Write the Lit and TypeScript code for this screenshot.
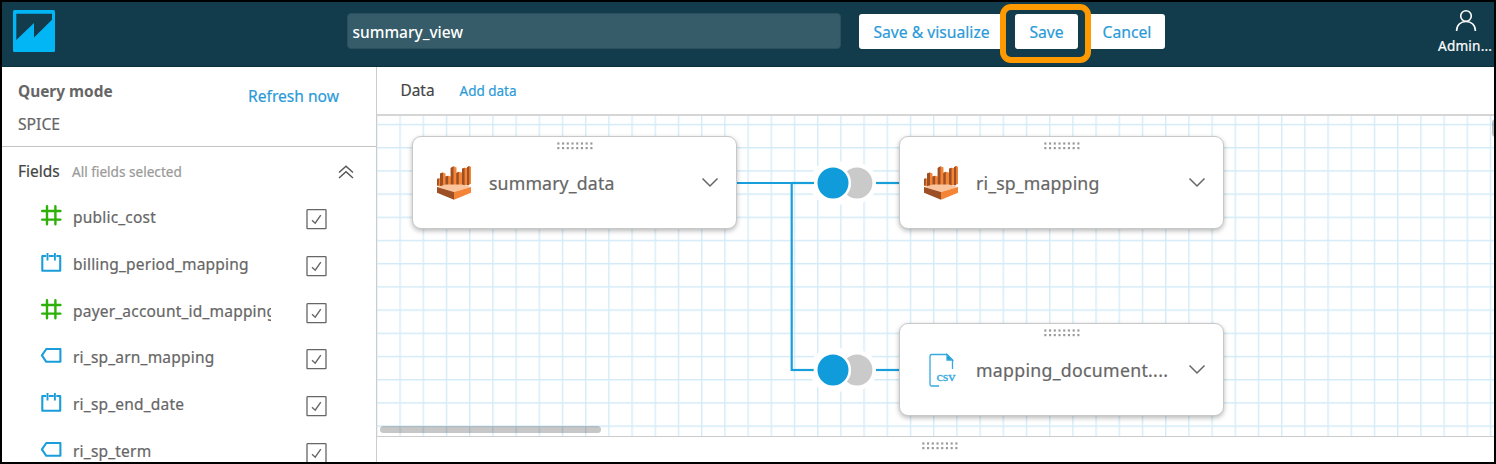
import { LitElement, html, svg, css } from "lit";
import { customElement, property } from "lit/decorators.js";

type FieldKind = "number" | "date" | "text";
interface Field { name: string; kind: FieldKind; }

const FIELDS: Field[] = [
  { name: "public_cost", kind: "number" },
  { name: "billing_period_mapping", kind: "date" },
  { name: "payer_account_id_mapping", kind: "number" },
  { name: "ri_sp_arn_mapping", kind: "text" },
  { name: "ri_sp_end_date", kind: "date" },
  { name: "ri_sp_term", kind: "text" },
];

const fieldIcon = (kind: FieldKind) => {
  if (kind === "number") {
    return html`<svg width="22" height="22" viewBox="0 0 22 22" fill="none" stroke="#2db008" stroke-width="2.4" stroke-linecap="round">
      <path d="M7 2.2v18M15.400 2.200v18M2.200 7h18.200M2.200 15.600h18.200" /></svg>`;
  }
  if (kind === "date") {
    return html`<svg width="22" height="22" viewBox="0 0 22 22" fill="none" stroke="#1b9dd9" stroke-width="2.1" stroke-linejoin="round">
      <path d="M6.200 5H2.300v14.700h17.900V5h-3.900M8.800 5h5" /><path d="M7.500 2v7.500M14.900 2v7.500" stroke-width="1.900" /></svg>`;
  }
  return html`<svg width="22" height="22" viewBox="0 0 22 22" fill="none" stroke="#1b9dd9" stroke-width="2.1" stroke-linejoin="round">
    <path d="M6.300 5h14.100v12.800H6.300L1.900 11.400z" /></svg>`;
};

@customElement("drag-dots")
class DragDots extends LitElement {
  static styles = css`
    :host { display: block; width: 36px; height: 8px; }
    svg { display: block; }
  `;
  render() {
    return html`<svg width="36" height="8" viewBox="0 0 36 8" fill="#999">
      ${[0, 1, 2, 3, 4, 5, 6, 7].map((i) => svg`
        <rect x=${0.3 + i * 4.72} y="0.400" width="2.100" height="2.200"></rect>
        <rect x=${0.3 + i * 4.72} y="5" width="2.100" height="2.200"></rect>`)}
    </svg>`;
  }
}

@customElement("field-row")
class FieldRow extends LitElement {
  @property({ attribute: false }) field!: Field;
  static styles = css`
    :host { display: flex; height: 46.800px; align-items: flex-start; padding-left: 38px; }
    .icon { width: 33px; height: 22px; flex: none; }
    .icon svg, .box svg { display: block; }
    .name { width: 198px; height: 26px; line-height: 26px; overflow: hidden; white-space: nowrap; font-size: 15.500px; letter-spacing: .2px; color: #666; -webkit-text-stroke: .2px #666; }
    .box { margin: 5px 0 0 35px; flex: none; }
  `;
  render() {
    return html`
      <div class="icon">${fieldIcon(this.field.kind)}</div>
      <div class="name">${this.field.name}</div>
      <div class="box"><svg width="21" height="21" viewBox="0 0 21 21" fill="none" stroke="#666">
        <rect x="1" y=".700" width="19" height="19" rx=".500" stroke-width="1.300" />
        <path d="M6 11.300l3.200 2.900 5.600-8" stroke-width="1.400" /></svg></div>`;
  }
}

@customElement("data-node")
class DataNode extends LitElement {
  @property() label = "";
  @property() kind = "athena";
  static styles = css`
    :host { display: flex; flex-direction: column; box-sizing: border-box; width: 325px; height: 93px;
      background: #fff; border: 1.500px solid #c8c8c8; border-radius: 9px; box-shadow: 0 2px 5px rgba(0,0,0,.28); }
    drag-dots { margin: 5px auto 0; }
    .body { display: flex; align-items: center; padding: 11px 17px 0 23px; height: 44px; }
    .body svg { display: block; flex: none; }
    .label { flex: 1; padding-left: 17px; font-size: 17.700px; letter-spacing: .150px; line-height: 26px; white-space: nowrap; color: #666; -webkit-text-stroke: .2px #666; }
    .doc .label { letter-spacing: .3px; }
    .csv { font: 12.500px "Liberation Serif", serif; }
  `;
  private athena() {
    return html`<svg width="36" height="36" viewBox="0 0 36 36">
      <path fill="#f58536" d="M1 14l3.500-1v8H1zM4 8.500l3-1 2.500 1V21H4zM9.500 11.500l2.700-.8 2.500.8V21H9.500zM14.700 3l2.800-1.700 3 1.200V21h-5.800zM20.300 8l2.500-1.300 3.200.8V21h-5.700zM26 3.800l2.600-1L31 3V2.300L33.200 1l1.800.8V19l-9 2z" />
      <path fill="#9d5025" d="M1 14l1.800-.7V20L1 20.500zM4 8.500l3-1V21H4zM9.500 11.500l2.700-.8V21H9.500zM14.700 3l2.800-1.700V21h-2.800zM20.300 8l2.500-1.300V21h-2.500zM26 3.800l2.600-1V21H26zM31 2.300L33.200 1v19L31 20.500z" />
      <path fill="#fbc49c" d="M1 22l9-2.500h16L35 22l-17 5z" />
      <path fill="#9d5025" d="M1 22l17 5v7.800L1 27.700z" />
      <path fill="#f58536" d="M35 22l-17 5v7.800l17-7.100z" />
    </svg>`;
  }
  private csv() {
    return html`<svg width="36" height="36" viewBox="0 0 36 36" fill="none" stroke="#36a9df" stroke-width="1.300">
      <path d="M16 34H8.500A1.500 1.500 0 0 1 7 32.500V4A1.500 1.500 0 0 1 8.500 2.500h15.500l5.500 5.500V17" />
      <path d="M24 2.500V8h5.500z" fill="#179bd7" />
      <text class="csv" x="13.500" y="28.500" textLength="19" lengthAdjust="spacingAndGlyphs" fill="#36a9df" stroke="#36a9df" stroke-width=".300">csv</text>
    </svg>`;
  }
  render() {
    return html`
      <drag-dots></drag-dots>
      <div class="body ${this.kind === "csv" ? "doc" : ""}">
        ${this.kind === "csv" ? this.csv() : this.athena()}
        <div class="label">${this.label}</div>
        <svg width="18" height="12" viewBox="0 0 18 12" fill="none" stroke="#666" stroke-width="1.500"><path d="M1.500 1.500L9 9l7.500-7.500" /></svg>
      </div>`;
  }
}

@customElement("app-root")
class AppRoot extends LitElement {
  static styles = css`
    :host { display: flex; flex-direction: column; box-sizing: border-box; width: 1496px; height: 464px; border: 2px solid #000;
      background: #fff; overflow: hidden; font-family: "Noto Sans", "Open Sans", sans-serif; color: #666; }
    svg { display: block; }
    .top { display: flex; height: 65px; flex: none; background: #123c4b; box-sizing: border-box; padding: 0 0 0 11px; align-items: flex-start; box-shadow: inset 0 -1px #0b303d; }
    .logo { margin-top: 8px; width: 42px; }
    .title { margin: 11px 0 0 292px; width: 494px; height: 35.500px; box-sizing: border-box; border: 1px solid #2a505e; border-radius: 4px; background: #365b69;
      color: #fff; font-size: 15.500px; font-weight: 500; line-height: 36px; padding-left: 4.500px; letter-spacing: 0; }
    .btn { height: 35px; margin-top: 11.500px; border: 0; padding: 0; border-radius: 3px; background: #fff; color: #2b9bd8; font: 15.700px/37px "Noto Sans", sans-serif; letter-spacing: 0; text-align: center; white-space: nowrap; -webkit-text-stroke: .2px #2b9bd8; }
    .visualize { width: 145px; margin-left: 18px; }
    .ring { box-sizing: border-box; width: 91px; height: 59px; border: 6px solid #ff9900; border-radius: 11px; margin: 2px 0 0 -4px; background: #123c4b; display: flex; justify-content: center; z-index: 1; }
    .save { width: 63px; margin: 3.500px 0 0 1px; padding-left: 1px; }
    .cancel { width: 77px; margin-left: -3px; padding-left: 1px; }
    .user { margin: 7px 0 0 auto; width: 56px; color: #fff; font-size: 13.600px; line-height: 20px; white-space: nowrap; -webkit-text-stroke: .2px #fff; }
    .user svg { margin-left: 16px; }
    .user .who { margin-top: 4px; letter-spacing: .2px; }
    .main { display: flex; flex: 1; min-height: 0; }
    .side { box-sizing: border-box; width: 375px; flex: none; border-right: 1.500px solid #ccc; overflow: hidden; }
    .mode { box-sizing: border-box; height: 80px; border-bottom: 1px solid #c4c4c4; display: flex; justify-content: space-between; padding: 12px 37px 0 16px; }
    .mode b { display: block; font-size: 15.400px; line-height: 25px; }
    .spice { font-size: 15.700px; line-height: 25px; margin-top: 8px; -webkit-text-stroke: .2px #666; }
    .link { color: #2b9bd8; -webkit-text-stroke: .2px #2b9bd8; }
    .refresh { font-size: 15.600px; line-height: 25px; margin-top: 5px; }
    .fields { height: 50px; display: flex; align-items: center; padding: 0 22px 0 16px; box-sizing: border-box; }
    .fields .t { color: #444; font-size: 15.500px; width: 54px; margin-top: -2px; -webkit-text-stroke: .2px #444; }
    .fields .s { color: #999; font-size: 13.600px; flex: 1; margin-top: -1px; -webkit-text-stroke: .2px #999; }
    .list { padding-top: 7px; }
    .work { flex: 1; min-width: 0; display: flex; flex-direction: column; }
    .bar { height: 49px; box-sizing: border-box; border-bottom: 2px solid #d5d5d5; display: flex; align-items: center; padding: 0 0 0 23.500px; }
    .bar .d { color: #444; font-size: 15.400px; width: 59px; -webkit-text-stroke: .2px #444; }
    .bar .a { font-size: 13.500px; margin-top: 1px; }
    .canvas { position: relative; height: 319.500px; overflow: hidden; flex: none; }
    .wires { position: absolute; left: 0; top: 0; }
    .n1 { position: absolute; left: 35px; top: 20px; }
    .n2 { position: absolute; left: 522px; top: 20px; }
    .n3 { position: absolute; left: 522px; top: 207px; }
    .hscroll { position: absolute; left: 3px; top: 310px; width: 221px; height: 7px; border-radius: 4px; background: rgba(0,0,0,.22); }
    .vscroll { position: absolute; right: -5px; top: 3px; width: 7px; height: 18px; border-radius: 4px; background: rgba(0,0,0,.25); }
    .foot { flex: 1; border-top: 1px solid #ccc; }
    .foot drag-dots { margin: 5px auto 0; position: relative; left: 4px; }
  `;
  private join(y: number) {
    return svg`
      <circle cx="456" cy=${y} r="23" fill="#fff"></circle>
      <circle cx="480" cy=${y} r="20" fill="#fff"></circle>
      <circle cx="480" cy=${y} r="15.400" fill="#cacaca"></circle>
      <circle cx="456" cy=${y} r="16.800" fill="#109bda" stroke="#fff" stroke-width="2.600"></circle>
      <path d=${`M499 ${y}h24`} stroke="#179fdb" stroke-width="2.200"></path>
      <path d=${`M414.700 ${y}h22`} stroke="#179fdb" stroke-width="2.200"></path>`;
  }
  render() {
    return html`
      <header class="top">
        <svg class="logo" width="42" height="42" viewBox="0 0 42 42"><rect width="42" height="42" rx="1.500" fill="#02b5f5" />
          <path d="M3.300 3.800h35.700v6L21 27.500V13L3.300 30z" fill="#123c4b" /></svg>
        <div class="title">summary_view</div>
        <button class="btn visualize">Save &amp; visualize</button>
        <div class="ring"><button class="btn save">Save</button></div>
        <button class="btn cancel">Cancel</button>
        <div class="user">
          <svg width="24" height="23" viewBox="0 0 24 23" fill="none" stroke="#fff" stroke-width="1.600"><circle cx="12" cy="7" r="5.300" /><path d="M2.600 22c0-6 4-9.500 9.400-9.500s9.400 3.500 9.400 9.500" /></svg>
          <div class="who">Admin...</div>
        </div>
      </header>
      <div class="main">
        <aside class="side">
          <section class="mode">
            <div><b>Query mode</b><div class="spice">SPICE</div></div>
            <div class="link refresh">Refresh now</div>
          </section>
          <div class="fields"><span class="t">Fields</span><span class="s">All fields selected</span>
            <svg width="16" height="14" viewBox="0 0 16 14" fill="none" stroke="#555" stroke-width="1.400"><path d="M1 7.500l7-6.300 7 6.300M1 13l7-6.300 7 6.300" /></svg>
          </div>
          <div class="list">${FIELDS.map((f) => html`<field-row .field=${f}></field-row>`)}</div>
        </aside>
        <main class="work">
          <div class="bar"><span class="d">Data</span><span class="link a">Add data</span></div>
          <div class="canvas">
            <svg class="wires" width="1119" height="320" viewBox="0 0 1119 320">
              <defs><pattern id="grid" x="22.400" y="7.800" width="23.200" height="23.200" patternUnits="userSpaceOnUse">
                <path d="M.7 0v23.200M0 .7h23.200" stroke="#d3ebf7" stroke-width="1.300" /></pattern></defs>
              <rect width="1119" height="320" fill="url(#grid)" />
              ${this.join(67)}${this.join(254)}
              <path d="M359 67h78M414.700 67v188" fill="none" stroke="#179fdb" stroke-width="2.200" />
            </svg>
            <data-node class="n1" label="summary_data"></data-node>
            <data-node class="n2" label="ri_sp_mapping"></data-node>
            <data-node class="n3" kind="csv" label="mapping_document...."></data-node>
            <div class="hscroll"></div><div class="vscroll"></div>
          </div>
          <div class="foot"><drag-dots></drag-dots></div>
        </main>
      </div>`;
  }
}
